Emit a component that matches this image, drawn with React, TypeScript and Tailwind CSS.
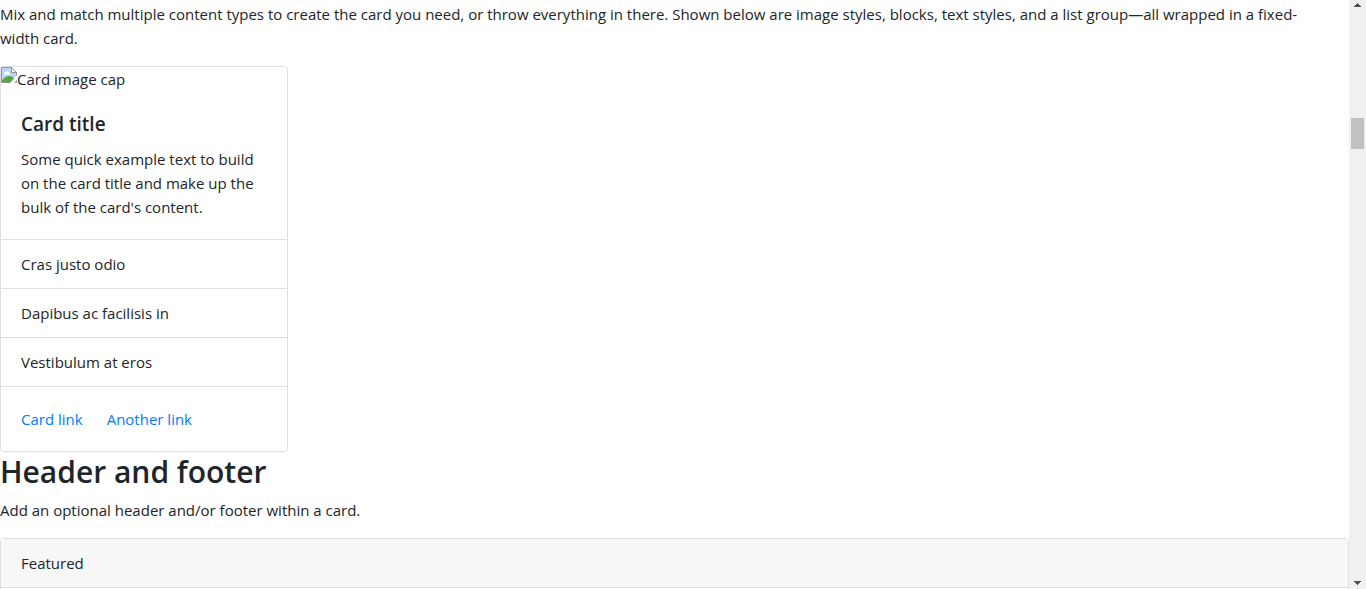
const listItems = ["Cras justo odio", "Dapibus ac facilisis in", "Vestibulum at eros"];

function MissingImage({ alt }: { alt: string }) {
  return (
    <div className="flex h-6 items-start" role="img" aria-label={alt}>
      <svg width="16" height="16" viewBox="0 0 16 16" className="shrink-0" aria-hidden="true">
        <path d="M.5 .5H10.5L15.5 5.5V15.5H.5Z" fill="#c3d5f6" stroke="#929292" />
        <path d="M3 7C3 5.8 4 5 5 5.2C5.6 4 7.6 4 8 5.6C9 5.6 9.4 7 8.6 7.4H3Z" fill="#fff" />
        <path d="M1 15V13.5C3 11 5.5 9 8 9C10.5 9 13 11 15 13.5V15Z" fill="#53a93f" />
        <path d="M10.5 .5V5.5H15.5Z" fill="#fff" stroke="#929292" />
        <path d="M9 16L16 8V13L13.5 16Z" fill="#fff" />
      </svg>
      <span>{alt}</span>
    </div>
  );
}

function ContentCard() {
  return (
    <article className="w-72 max-w-full rounded border border-[#dfdfdf] bg-white">
      <MissingImage alt="Card image cap" />
      <div className="p-5">
        <h3 className="mb-[11px] pt-px text-[19px] leading-6 font-semibold">Card title</h3>
        <p>Some quick example text to build on the card title and make up the bulk of the card's content.</p>
      </div>
      <ul>
        {listItems.map((item) => (
          <li key={item} className="border-t border-[#dfdfdf] px-5 py-3">{item}</li>
        ))}
      </ul>
      <div className="flex gap-6 border-t border-[#dfdfdf] p-5 text-[#007bff]">
        <a href="#card" className="hover:underline">Card link</a>
        <a href="#another" className="hover:underline">Another link</a>
      </div>
    </article>
  );
}

function Scrollbar() {
  return (
    <div className="flex w-[17px] shrink-0 flex-col items-center justify-between bg-[#f0f0f0]" aria-hidden="true">
      <div>
        <svg width="17" height="17" viewBox="0 0 17 17" shapeRendering="crispEdges">
          <path d="M8 3h1v1h1v1h1v1h1v1H5V6h1V5h1V4h1z" fill="#505050" />
        </svg>
        <div className="mx-auto mt-[101px] h-[31px] w-[13px] bg-[#c1c1c1]" />
      </div>
      <svg width="17" height="17" viewBox="0 0 17 17" shapeRendering="crispEdges">
        <path d="M5 9h7v1h-1v1h-1v1H9v1H8v-1H7v-1H6v-1H5z" fill="#505050" />
      </svg>
    </div>
  );
}

export default function App() {
  return (
    <div className="flex h-screen overflow-hidden bg-white font-['Open_Sans','Noto_Sans',sans-serif] text-[15px] leading-6 text-[#212529]">
      <main className="min-w-0 flex-1 overflow-hidden pt-0.5">
        <p className="mb-4 pr-6">
          Mix and match multiple content types to create the card you need, or throw everything in there. Shown below are image styles, blocks, text styles, and a list group—all wrapped in a fixed-width card.
        </p>
        <ContentCard />
        <h2 className="mb-[7px] pt-px text-[30px] leading-[38px] font-semibold">Header and footer</h2>
        <p className="mb-4">Add an optional header and/or footer within a card.</p>
        <article className="rounded border border-[#dfdfdf]">
          <header className="border-b border-[#dfdfdf] bg-[#f7f7f7] px-5 py-3">Featured</header>
          <div className="p-5" />
        </article>
      </main>
      <Scrollbar />
    </div>
  );
}
